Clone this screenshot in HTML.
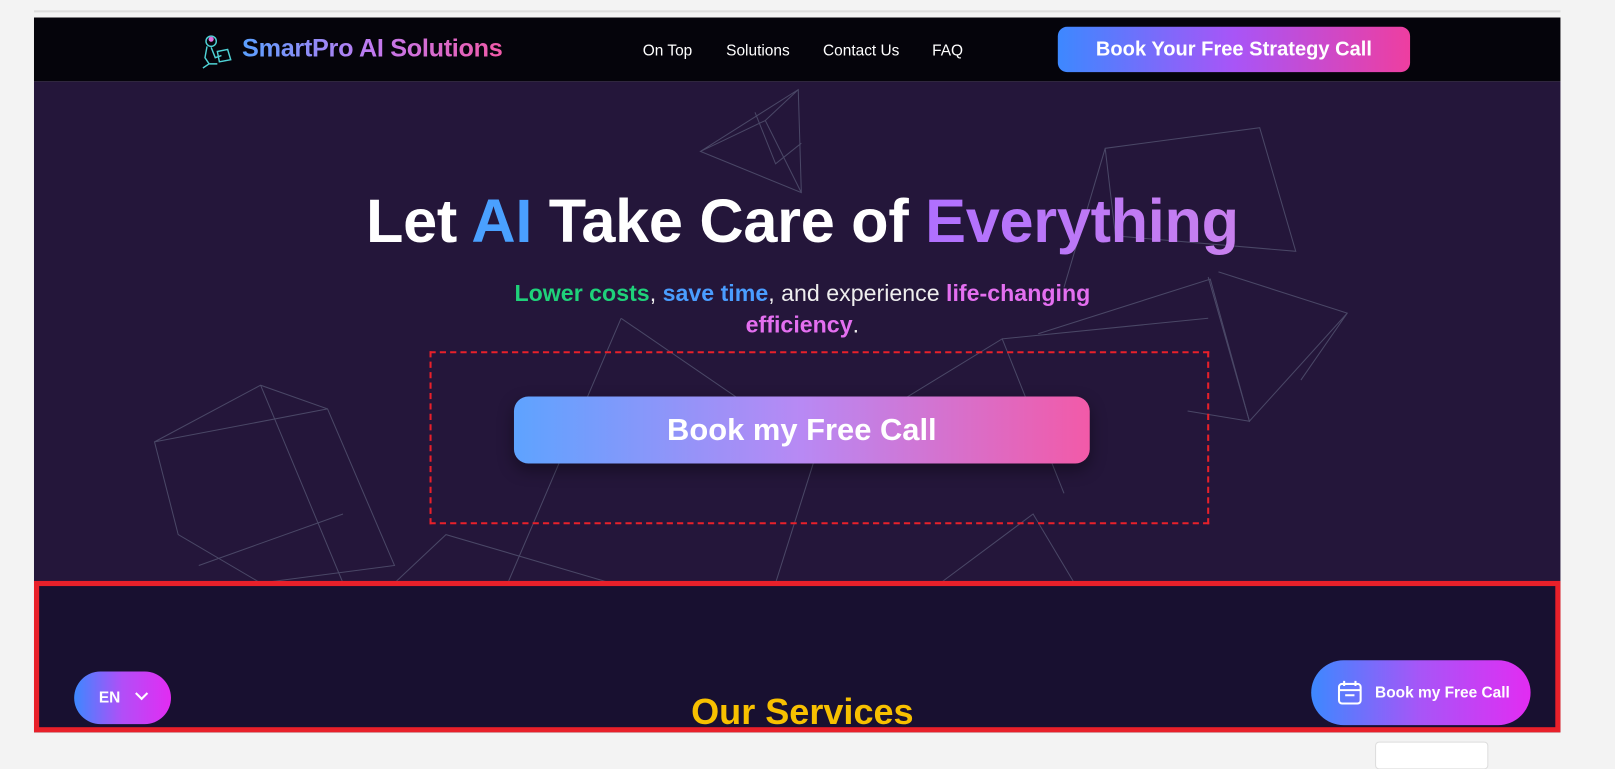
<!DOCTYPE html>
<html><head><meta charset="utf-8">
<style>
*{margin:0;padding:0;box-sizing:border-box}
body{width:1615px;height:747px;background:#f3f3f3;position:relative;overflow:hidden;font-family:"Liberation Sans","DejaVu Sans",sans-serif}
#w{position:absolute;left:0;top:0;width:1568px;height:725px;transform:scale(1.03);transform-origin:0 0}
.abs{position:absolute}
#nav{left:33px;top:17px;width:1482px;height:62px;background:#05040b}
#hero{left:33px;top:79px;width:1482px;height:487px;background:#24163a}
#sec{left:33px;top:564px;width:1482px;height:147px;background:#181030;border:5px solid #e8202a}
.gt{background:linear-gradient(90deg,#5aa0ff,#c07af0,#f25aa8);-webkit-background-clip:text;background-clip:text;color:transparent}
.nl{color:#fff;font-size:15px;top:41px}
</style></head><body><div id="w">
<div class="abs" style="left:33px;top:10px;width:1482px;height:2px;background:#ddd"></div>
<div id="nav" class="abs"></div>
<svg class="abs" style="left:193px;top:32px" width="34" height="36" viewBox="0 0 34 36" fill="none" stroke="#4fd3d6" stroke-width="1.4"><circle cx="12" cy="8" r="5"/><circle cx="12" cy="6" r="2.5" fill="#e070e0" stroke="none"/><path d="M8 13 L6 24 L10 30 L4 34 M12 14 L16 24 L22 22 M10 30 L18 30 M18 18 L28 16 L31 26 L20 28 Z"/></svg>
<div class="abs gt" style="left:235px;top:34px;font-size:24.5px;font-weight:bold;letter-spacing:-0.3px">SmartPro AI Solutions</div>
<div class="abs nl" style="left:624px">On Top</div>
<div class="abs nl" style="left:705px">Solutions</div>
<div class="abs nl" style="left:799px">Contact Us</div>
<div class="abs nl" style="left:905px">FAQ</div>
<div class="abs" style="left:1027px;top:26px;width:342px;height:44px;border-radius:9px;background:linear-gradient(90deg,#3d88ff,#a855f7,#ee3ea0);color:#fff;font-weight:bold;font-size:19.5px;text-align:center;line-height:44px">Book Your Free Strategy Call</div>
<div id="hero" class="abs"></div>
<svg class="abs" style="left:33px;top:79px" width="1482" height="487" fill="none" stroke="#4a4766" stroke-width="1">
<path d="M647 68 L742 8 L745 108 Z M647 68 L710 38 L745 108 M710 38 L742 8 M700 30 L720 80 L745 60"/>
<path d="M1040 65 L1190 45 L1225 165 L1050 150 Z M1040 65 L1000 200 M1150 185 L1275 225 L1230 290 M1140 190 L1180 330 L1275 225"/>
<path d="M117 350 L220 295 L285 318 L350 470 L220 487 L140 440 Z M117 350 L285 318 M220 295 L300 487 M160 470 L300 420"/>
<path d="M570 230 L460 487 M570 230 L760 360 L940 250 L1000 400 M760 360 L720 487 M940 250 L1140 230 M975 245 L1142 192 L1180 330 L1120 320"/>
<path d="M350 487 L400 440 L560 487 M880 487 L970 420 L1010 487"/>
</svg>
<div class="abs" style="left:0;top:180px;width:1558px;text-align:center;color:#fff;font-size:59.5px;font-weight:bold;letter-spacing:-0.3px">Let <span style="color:#4aa0ff">AI</span> Take Care of <span class="gt" style="background:linear-gradient(90deg,#b070ff,#c880ee);-webkit-background-clip:text;background-clip:text">Everything</span></div>
<div class="abs" style="left:470px;top:269px;width:618px;text-align:center;color:#eee;font-size:22.5px;line-height:31px"><b style="color:#1fd17a">Lower costs</b>, <b style="color:#4a9dff">save time</b>, and experience <b style="color:#e46ff0">life-changing efficiency</b>.</div>
<div class="abs" style="left:417px;top:341px;width:757px;height:168px;border:2px dashed #e8202a"></div>
<div class="abs" style="left:499px;top:385px;width:559px;height:65px;border-radius:14px;background:linear-gradient(90deg,#5ea3ff,#b889f4,#f25aa8);color:#fff;font-weight:bold;font-size:30px;text-align:center;line-height:65px;box-shadow:0 6px 16px rgba(0,0,0,.4)">Book my Free Call</div>
<div id="sec" class="abs"></div>
<div class="abs" style="left:0;top:672px;width:1558px;text-align:center;color:#f7c000;font-size:35px;font-weight:bold">Our Services</div>
<div class="abs" style="left:72px;top:652px;width:94px;height:51px;border-radius:26px;background:linear-gradient(90deg,#3d88ff,#b24ef7,#e22cf2);color:#fff;font-weight:bold;font-size:15px;line-height:51px;padding-left:24px">EN <span style="display:inline-block;width:9px;height:9px;border-right:2px solid #fff;border-bottom:2px solid #fff;transform:rotate(45deg);margin:0 0 4px 12px"></span></div>
<div class="abs" style="left:1273px;top:641px;width:213px;height:63px;border-radius:32px;background:linear-gradient(90deg,#3d88ff,#a855f7,#e22cf2);color:#fff;font-weight:bold;font-size:15px;line-height:63px;padding-left:62px">Book my Free Call</div>
<svg class="abs" style="left:1298px;top:660px" width="25" height="25" viewBox="0 0 25 25" fill="none" stroke="#fff" stroke-width="2"><rect x="2" y="4" width="21" height="19" rx="3"/><path d="M7 1v5M18 1v5M2 10h21M8 15h9"/></svg>
<div class="abs" style="left:1335px;top:720px;width:110px;height:27px;background:#fff;border:1px solid #ddd;border-radius:4px"></div>
</div></body></html>
